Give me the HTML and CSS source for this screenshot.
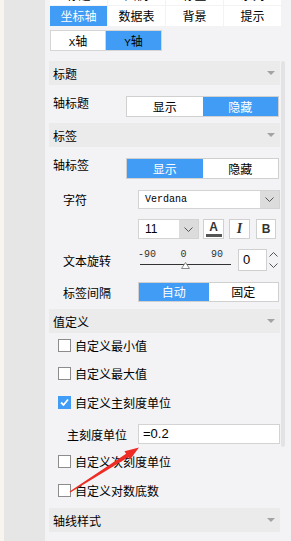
FILE: index.html
```html
<!DOCTYPE html>
<html lang="zh-CN">
<head>
  <meta charset="UTF-8">
  <title>坐标轴设置</title>
  <link rel="stylesheet" href="styles.css">
</head>
<body>
<div class="app">
  <div class="edge"></div>
  <div class="rail"></div>

  <div class="main">
    <!-- first row of style tabs, scrolled out of view -->
    <div class="tabs tabs-cut">
      <div class="tab">标题</div>
      <div class="tab">图例</div>
      <div class="tab">标签</div>
      <div class="tab">系列</div>
    </div>
    <div class="tabs">
      <div class="tab active">坐标轴</div>
      <div class="tab">数据表</div>
      <div class="tab">背景</div>
      <div class="tab">提示</div>
    </div>

    <div class="axis-tabs">
      <div class="axis-tab"><span class="mono">X</span>轴</div>
      <div class="axis-tab active"><span class="mono">Y</span>轴</div>
    </div>

    <div class="panel">
      <div class="panel-body">
        <div class="section-head">标题<span class="caret"></span></div>
        <div class="field field-top m11">
          <span class="label">轴标题</span>
          <div class="toggle"><span>显示</span><span class="on">隐藏</span></div>
        </div>

        <div class="section-head m6">标签<span class="caret"></span></div>
        <div class="field field-top m11">
          <span class="label">轴标签</span>
          <div class="toggle"><span class="on">显示</span><span>隐藏</span></div>
        </div>

        <div class="field sub m11">
          <span class="label">字符</span>
          <div class="select font-select">
            <span class="select-text mono">Verdana</span>
            <span class="select-btn">
              <svg width="9" height="5" viewBox="0 0 9 5"><polyline points="0.5,0.5 4.5,4.5 8.5,0.5" fill="none" stroke="#555" stroke-width="1"/></svg>
            </span>
          </div>
        </div>

        <div class="field sub m10">
          <span class="label"></span>
          <div class="select size-select">
            <span class="select-text">11</span>
            <span class="select-btn">
              <svg width="9" height="5" viewBox="0 0 9 5"><polyline points="0.5,0.5 4.5,4.5 8.5,0.5" fill="none" stroke="#555" stroke-width="1"/></svg>
            </span>
          </div>
          <div class="btn btn-color"><span class="btn-a">A</span><span class="color-bar"></span></div>
          <div class="btn btn-italic">I</div>
          <div class="btn btn-bold">B</div>
        </div>

        <div class="field sub m10">
          <span class="label">文本旋转</span>
          <div class="slider">
            <div class="slider-marks"><span>-90</span><span>0</span><span>90</span></div>
            <div class="slider-line"></div>
            <svg class="slider-thumb" width="9" height="7" viewBox="0 0 9 7"><polygon points="4.5,0.5 8.5,6.5 0.5,6.5" fill="#fff" stroke="#888" stroke-width="1"/></svg>
          </div>
          <div class="number"><span>0</span></div>
          <div class="spinner">
            <svg width="9" height="5" viewBox="0 0 9 5"><polyline points="0.5,4.5 4.5,0.5 8.5,4.5" fill="none" stroke="#555" stroke-width="1"/></svg>
            <svg width="9" height="5" viewBox="0 0 9 5"><polyline points="0.5,0.5 4.5,4.5 8.5,0.5" fill="none" stroke="#555" stroke-width="1"/></svg>
          </div>
        </div>

        <div class="field sub m11">
          <span class="label">标签间隔</span>
          <div class="toggle toggle-small"><span class="on">自动</span><span>固定</span></div>
        </div>

        <div class="section-head m7">值定义<span class="caret"></span></div>
        <div class="check-row">
          <span class="box"></span>自定义最小值
        </div>
        <div class="check-row m4">
          <span class="box"></span>自定义最大值
        </div>
        <div class="check-row m5">
          <span class="box checked">
            <svg width="11" height="11" viewBox="0 0 11 11"><polyline points="2,5.5 4.5,8 9,2.5" fill="none" stroke="#fff" stroke-width="1.8"/></svg>
          </span>自定义主刻度单位
        </div>
        <div class="field unit m10">
          <span class="label">主刻度单位</span>
          <div class="text-input">=0.2</div>
        </div>
        <div class="check-row m5">
          <span class="box"></span>自定义次刻度单位
        </div>
        <div class="check-row m5">
          <span class="box"></span>自定义对数底数
        </div>

        <div class="section-head m6">轴线样式<span class="caret"></span></div>
      </div>
      <div class="scrollbar"></div>
    </div>
  </div>

  <!-- red annotation arrow drawn over the panel -->
  <svg class="arrow" width="291" height="541" viewBox="0 0 291 541">
    <polygon points="69.6,491.6 126.1,453.8 124.5,451.3 139,447.5 129.9,459.7 128.3,457.2 70.3,492.4" fill="#ee2b24"/>
  </svg>
</div>
</body>
</html>
```

FILE: styles.css
```css
body {
  margin: 0px;
  font-family: "Noto Sans CJK SC", "Noto Sans", sans-serif;
  font-size: 12px;
  color: #000;
}

.app {
  position: relative;
  display: flex;
  width: 291px;
  height: 541px;
  overflow: hidden;
  background: #f3f3f5;
}

.edge {
  width: 4px;
  background: #f8f5ee;
}

.rail {
  width: 41px;
  background: #e6e6e6;
}

.main {
  flex: 1;
  padding-left: 4px;
  background: #f3f3f5;
}

.mono {
  font-family: "Liberation Mono", "DejaVu Sans Mono", monospace;
}

/* tab rows */
.tabs {
  display: grid;
  grid-template-columns: repeat(4, 57px);
  gap: 1px;
  margin-left: 1px;
  margin-top: 1px;
}

.tabs-cut {
  margin-top: -15px;
}

.tab {
  height: 20px;
  line-height: 20px;
  text-align: center;
  background: #fff;
  font-size: 12px;
}

.tab.active {
  background: #409cf5;
  color: #fff;
}

.axis-tabs {
  display: flex;
  margin-top: 4px;
  margin-left: 1px;
}

.axis-tab {
  width: 56px;
  height: 21px;
  box-sizing: border-box;
  border: 1px solid #d5d5d5;
  background: #fff;
  line-height: 19px;
  text-align: center;
  font-size: 12px;
}

.axis-tab + .axis-tab {
  border-left: none;
}

.axis-tab.active {
  background: #409cf5;
}

.axis-tab .mono {
  font-size: 11px;
}

/* settings panel */
.panel {
  display: flex;
  align-items: flex-start;
  gap: 1px;
  margin-top: 10px;
}

.panel-body {
  width: 231px;
}

.scrollbar {
  width: 4px;
  height: 386px;
  border-radius: 2px;
  background: #e3e3e5;
}

.section-head {
  display: flex;
  justify-content: space-between;
  align-items: center;
  height: 24px;
  padding-left: 4px;
  padding-right: 5px;
  background: #ebebeb;
  font-size: 12px;
}

.caret {
  width: 0;
  height: 0;
  border-left: 4px solid transparent;
  border-right: 4px solid transparent;
  border-top: 4px solid #a3a3a3;
}

.m4 { margin-top: 4px; }
.m5 { margin-top: 5px; }
.m6 { margin-top: 6px; }
.m7 { margin-top: 7px; }
.m10 { margin-top: 10px; }
.m11 { margin-top: 11px; }

.field {
  display: flex;
  align-items: center;
  padding-left: 4px;
}

.field .label {
  width: 73px;
  flex-shrink: 0;
}

.field-top {
  align-items: flex-start;
}

.field-top .label {
  line-height: 14px;
}

.field.sub {
  padding-left: 14px;
}

.field.sub .label {
  width: 75px;
}

.field.unit {
  padding-left: 18px;
}

.field.unit .label {
  width: 71px;
}

.toggle {
  display: grid;
  grid-template-columns: 1fr 1fr;
  width: 153px;
  height: 21px;
  box-sizing: border-box;
  border: 1px solid #d0d0d0;
  background: #fff;
}

.toggle span {
  line-height: 19px;
  text-align: center;
  font-size: 12px;
}

.toggle .on {
  background: #409cf5;
  color: #fff;
}

.toggle-small {
  width: 141px;
  height: 20px;
}

.toggle-small span {
  line-height: 18px;
}

/* selects and buttons */
.select {
  display: flex;
  height: 19px;
  box-sizing: border-box;
  border: 1px solid #d3d3d3;
  background: #fff;
}

.select-text {
  flex: 1;
  padding-left: 5px;
  line-height: 17px;
}

.font-select {
  width: 142px;
}

.font-select .select-text {
  font-size: 10px;
  padding-left: 6px;
}

.size-select {
  width: 61px;
  height: 20px;
}

.size-select .select-text {
  font-family: "Liberation Sans", Arial, sans-serif;
  font-size: 12px;
  padding-left: 6px;
  line-height: 18px;
}

.select-btn {
  display: flex;
  align-items: center;
  justify-content: center;
  width: 19px;
  background: #dcdcdc;
}

.btn {
  display: flex;
  align-items: center;
  justify-content: center;
  width: 21px;
  height: 20px;
  box-sizing: border-box;
  border: 1px solid #d0d0d0;
  background: #fff;
  color: #333;
}

.btn-color {
  flex-direction: column;
  gap: 1px;
  margin-left: 4px;
}

.btn-a {
  font-family: "Liberation Sans", Arial, sans-serif;
  font-weight: bold;
  font-size: 12px;
  line-height: 11px;
}

.color-bar {
  width: 16px;
  height: 3px;
  background: #555;
}

.btn-italic {
  margin-left: 5px;
  font-family: "Liberation Serif", serif;
  font-style: italic;
  font-weight: bold;
  font-size: 14px;
}

.btn-bold {
  width: 20px;
  margin-left: 6px;
  font-family: "Liberation Sans", Arial, sans-serif;
  font-weight: bold;
  font-size: 12px;
}

/* rotation slider */
.slider {
  position: relative;
  width: 91px;
  height: 22px;
  margin-left: 2px;
}

.slider-marks {
  display: flex;
  justify-content: space-between;
  width: 85px;
  margin-left: -2px;
  font-family: "Liberation Mono", "DejaVu Sans Mono", monospace;
  font-size: 10px;
  line-height: 12px;
  color: #333;
}

.slider-line {
  height: 1px;
  margin-top: 3px;
  background: #333;
}

.slider-thumb {
  position: absolute;
  left: 41px;
  top: 13px;
}

.number {
  width: 29px;
  height: 22px;
  box-sizing: border-box;
  margin-left: 7px;
  border: 1px solid #d0d0d0;
  background: #fff;
  padding-left: 4px;
  font-family: "Liberation Sans", Arial, sans-serif;
  font-size: 13px;
  line-height: 20px;
}

.spinner {
  display: flex;
  flex-direction: column;
  justify-content: space-between;
  height: 16px;
  margin-left: 1px;
  padding: 0 1px;
}

/* checkboxes */
.check-row {
  display: flex;
  align-items: center;
  height: 24px;
  padding-left: 9px;
  font-size: 12px;
}

.box {
  display: flex;
  align-items: center;
  justify-content: center;
  width: 13px;
  height: 13px;
  box-sizing: border-box;
  margin-right: 4px;
  border: 1px solid #8c8c8c;
  background: #fff;
}

.box.checked {
  border-color: #409cf5;
  background: #409cf5;
}

.text-input {
  width: 143px;
  height: 20px;
  box-sizing: border-box;
  border: 1px solid #d3d3d3;
  background: #fff;
  padding-left: 4px;
  font-family: "Liberation Sans", Arial, sans-serif;
  font-size: 13px;
  line-height: 18px;
}

.arrow {
  position: absolute;
  top: 0;
  left: 0;
  pointer-events: none;
}
```
